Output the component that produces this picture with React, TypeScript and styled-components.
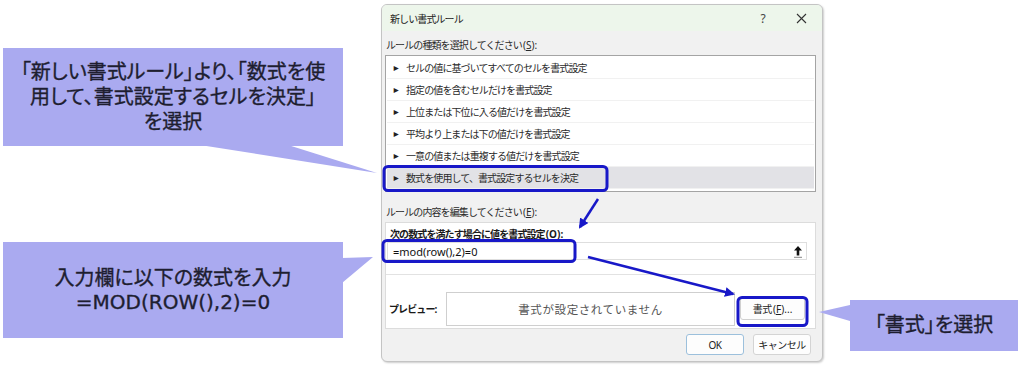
import styled, { createGlobalStyle } from "styled-components";

const GlobalStyle = createGlobalStyle`
  html, body {
    margin: 0;
    padding: 0;
    background: #fff;
  }
  body {
    font-family: "Noto Sans", "Noto Sans CJK JP", sans-serif;
    color: #222;
  }
`;

const rules = [
  "セルの値に基づいてすべてのセルを書式設定",
  "指定の値を含むセルだけを書式設定",
  "上位または下位に入る値だけを書式設定",
  "平均より上または下の値だけを書式設定",
  "一意の値または重複する値だけを書式設定",
  "数式を使用して、書式設定するセルを決定",
];

const CALLOUT = "#aaaaf0";
const MARK = "#1818c8";

const App = () => {
  return (
    <>
      <GlobalStyle />
      <Page>
        <LeftColumn>
          <Callout $height={98} $size={20}>
            「新しい書式ルール」より、「数式を使
            <br />
            用して、書式設定するセルを決定」
            <br />
            を選択
          </Callout>
          <Callout $height={96} $size={20} $lineHeight={24}>
            <span>入力欄に以下の数式を入力</span>
            <Formula>=MOD(ROW(),2)=0</Formula>
          </Callout>
        </LeftColumn>

        <Dialog>
          <TitleBar>
            <Title>新しい書式ルール</Title>
            <ControlButton>?</ControlButton>
            <ControlButton>
              <svg width="11" height="11" viewBox="0 0 11 11">
                <path d="M1 1 L10 10 M10 1 L1 10" stroke="#333" strokeWidth="1.1" />
              </svg>
            </ControlButton>
          </TitleBar>

          <Body>
            <SectionLabel $top={7}>
              ルールの種類を選択してください<Latin>(<u>S</u>):</Latin>
            </SectionLabel>
            <ListBox>
              {rules.map((r, i) => (
                <RuleRow key={r} $selected={i === rules.length - 1}>
                  <Bullet>►</Bullet>
                  {r}
                </RuleRow>
              ))}
            </ListBox>

            <SectionLabel $top={13}>
              ルールの内容を編集してください<Latin>(<u>E</u>):</Latin>
            </SectionLabel>
            <EditPanel>
              <FormulaSection>
                <BoldLabel>
                  次の数式を満たす場合に値を書式設定<Latin>(<u>O</u>):</Latin>
                </BoldLabel>
                <FormulaInput>
                  <FormulaText>=mod(row(),2)=0</FormulaText>
                  <RefButton>
                    <svg width="10" height="13" viewBox="0 0 10 13">
                      <path d="M5 1 L9 5.5 H6.3 V10.5 H3.7 V5.5 H1 Z" fill="#111" />
                      <path d="M1 12.3 H9" stroke="#666" strokeWidth="0.8" />
                    </svg>
                  </RefButton>
                </FormulaInput>
              </FormulaSection>
              <PreviewRow>
                <PreviewLabel>プレビュー:</PreviewLabel>
                <PreviewBox>書式が設定されていません</PreviewBox>
                <FormatButton>
                  書式<Latin>(<u>F</u>)...</Latin>
                </FormatButton>
              </PreviewRow>
            </EditPanel>

            <Footer>
              <DialogButton $primary>OK</DialogButton>
              <DialogButton>キャンセル</DialogButton>
            </Footer>
          </Body>
        </Dialog>

        <RightColumn>
          <Callout $height={51} $size={20} $width={168}>
            「書式」を選択
          </Callout>
        </RightColumn>

        <Overlay width="1024" height="368" viewBox="0 0 1024 368">
          <defs>
            <marker
              id="head"
              viewBox="0 0 10 10"
              refX="8"
              refY="5"
              markerWidth="4"
              markerHeight="4"
              orient="auto"
            >
              <path d="M0 0 L10 5 L0 10 Z" fill={MARK} />
            </marker>
          </defs>
          <polygon points="200,145 288,145 377,173" fill={CALLOUT} />
          <polygon points="342,258 373,257 342,283" fill={CALLOUT} />
          <polygon points="850,305 819,312 850,321" fill={CALLOUT} />

          <rect x="384" y="166.5" width="223" height="24" rx="4" fill="none" stroke={MARK} strokeWidth="3" />
          <rect x="383" y="240.5" width="192" height="21" rx="4" fill="none" stroke={MARK} strokeWidth="3" />
          <rect x="738" y="297.5" width="69" height="28" rx="4" fill="none" stroke={MARK} strokeWidth="3" />

          <line x1="598" y1="199" x2="580" y2="227" stroke={MARK} strokeWidth="2.5" markerEnd="url(#head)" />
          <line x1="588" y1="257" x2="733" y2="294" stroke={MARK} strokeWidth="2.5" markerEnd="url(#head)" />
        </Overlay>
      </Page>
    </>
  );
};

const Page = styled.div`
  position: relative;
  width: 1024px;
  height: 368px;
  display: grid;
  grid-template-columns: 381px 442px 1fr;
  overflow: hidden;
`;

const LeftColumn = styled.div`
  display: flex;
  flex-direction: column;
  gap: 96px;
  padding: 48px 0 0 3px;
`;

const RightColumn = styled.div`
  padding: 300px 0 0 27px;
`;

const Callout = styled.div<{
  $height: number;
  $size: number;
  $lineHeight?: number;
  $width?: number;
}>`
  width: ${(p) => p.$width ?? 340}px;
  height: ${(p) => p.$height}px;
  box-sizing: border-box;
  background: ${CALLOUT};
  display: flex;
  flex-direction: column;
  align-items: center;
  justify-content: center;
  text-align: center;
  font-family: "Liberation Sans", "Noto Sans CJK JP", sans-serif;
  font-weight: 400;
  font-size: ${(p) => p.$size}px;
  line-height: ${(p) => p.$lineHeight ?? 25}px;
  font-feature-settings: "palt";
  -webkit-text-stroke: 0.35px #1e1e30;
  color: #1e1e30;
`;

const Formula = styled.span`
  font-family: "DejaVu Sans", sans-serif;
  font-size: 20px;
  letter-spacing: 0;
`;

const Dialog = styled.div`
  margin-top: 4px;
  height: 358px;
  box-sizing: border-box;
  border: 1px solid #c4c4c4;
  border-radius: 6px;
  background: #f1f1f1;
  box-shadow: 1px 1px 2px rgba(0, 0, 0, 0.2);
  display: flex;
  flex-direction: column;
  overflow: hidden;
  font-size: 10px;
  letter-spacing: -0.9px;
`;

const Latin = styled.span`
  letter-spacing: 0;
  margin-left: 1px;
`;

const TitleBar = styled.div`
  height: 26px;
  flex-shrink: 0;
  display: flex;
  align-items: center;
  padding: 0 2px 0 8px;
  background: #edf6eb;
`;

const Title = styled.div`
  flex: 1;
`;

const ControlButton = styled.div`
  width: 38px;
  display: flex;
  justify-content: center;
  align-items: center;
  font-size: 12px;
  color: #444;
  letter-spacing: 0;
`;

const Body = styled.div`
  display: flex;
  flex-direction: column;
  padding: 0 6px 0 3px;
`;

const SectionLabel = styled.div<{ $top: number }>`
  margin: ${(p) => p.$top}px 0 3px 1px;
  line-height: 14px;
  color: #2a2a2a;
`;

const ListBox = styled.div`
  height: 137px;
  box-sizing: border-box;
  border: 1px solid #a4a4a4;
  background: #fff;
  padding: 1px;
`;

const RuleRow = styled.div<{ $selected?: boolean }>`
  height: 22px;
  box-sizing: border-box;
  display: flex;
  align-items: center;
  padding-left: 5px;
  border-bottom: 1px solid #f1f1f1;
  background: ${(p) => (p.$selected ? "#e2e2e6" : "#fff")};
  color: #2a2a2a;
`;

const Bullet = styled.span`
  font-size: 8.5px;
  width: 14px;
  color: #222;
`;

const EditPanel = styled.div`
  height: 107px;
  box-sizing: border-box;
  border: 1px solid #dcdcdc;
  background: #fff;
  display: flex;
  flex-direction: column;
`;

const FormulaSection = styled.div`
  height: 52px;
  box-sizing: border-box;
  border-bottom: 1px solid #e2e2e2;
  padding-top: 4px;
`;

const BoldLabel = styled.div`
  font-weight: 700;
  line-height: 14px;
  padding-left: 4px;
  color: #1a1a1a;
`;

const FormulaInput = styled.div`
  height: 18px;
  margin: 1px 8px 0 1px;
  box-sizing: border-box;
  border: 1px solid #dedede;
  display: flex;
  align-items: center;
  padding: 0 3px 0 5px;
`;

const FormulaText = styled.span`
  flex: 1;
  font-size: 11px;
  letter-spacing: 0;
  color: #111;
`;

const RefButton = styled.div`
  display: flex;
  align-items: center;
`;

const PreviewRow = styled.div`
  flex: 1;
  display: flex;
  align-items: center;
  padding: 14px 0 0 3px;
`;

const PreviewLabel = styled.div`
  width: 57px;
  font-weight: 700;
  color: #1a1a1a;
`;

const PreviewBox = styled.div`
  width: 289px;
  height: 34px;
  box-sizing: border-box;
  border: 1px solid #cfcfcf;
  display: flex;
  align-items: center;
  justify-content: center;
  font-size: 11.5px;
  letter-spacing: 0.6px;
  color: #555;
`;

const FormatButton = styled.div`
  width: 65px;
  height: 23px;
  margin-left: 5px;
  box-sizing: border-box;
  border: 1px solid #d0d0d0;
  border-radius: 3px;
  background: #fdfdfd;
  display: flex;
  align-items: center;
  justify-content: center;
  font-size: 10px;
  letter-spacing: -0.4px;
`;

const Footer = styled.div`
  display: flex;
  justify-content: flex-end;
  gap: 9px;
  padding: 5px 5px 0 0;
`;

const DialogButton = styled.div<{ $primary?: boolean }>`
  width: 58px;
  height: 21px;
  box-sizing: border-box;
  border: 1px solid ${(p) => (p.$primary ? "#9cc0dc" : "#d4d4d4")};
  border-radius: 3px;
  background: #fdfdfd;
  display: flex;
  align-items: center;
  justify-content: center;
  font-size: 10px;
  letter-spacing: -0.5px;
`;

const Overlay = styled.svg`
  position: absolute;
  left: 0;
  top: 0;
  pointer-events: none;
`;

export default App;
